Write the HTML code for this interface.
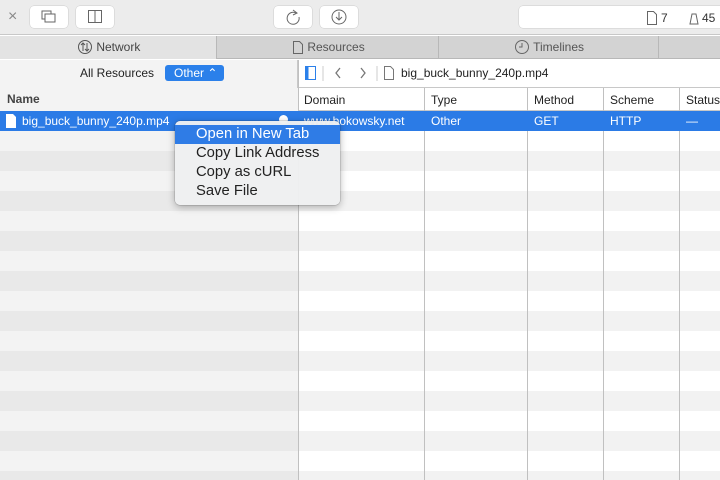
<!DOCTYPE html>
<html><head><style>
*{margin:0;padding:0;box-sizing:border-box}
body{width:720px;height:480px;overflow:hidden;font-family:"Liberation Sans",sans-serif;font-size:12px;color:#222;background:#fff;position:relative}
.abs{position:absolute}
.btn{position:absolute;top:6px;height:22px;background:#fff;border-radius:4px;box-shadow:0 0 0 0.5px #ccc}
</style></head><body>
<div class="abs" style="left:0;top:0;width:720px;height:35px;background:#ececec;border-bottom:1px solid #c8c8c8"></div>
<div class="abs" style="left:8px;top:8px;font-size:16px;color:#888">×</div>
<div class="btn" style="left:30px;width:38px"><svg width="38" height="22"><rect x="12" y="5" width="9" height="8" fill="none" stroke="#666"/><rect x="15" y="8" width="10" height="8" fill="#fff" stroke="#666"/></svg></div>
<div class="btn" style="left:76px;width:38px"><svg width="38" height="22"><rect x="12.5" y="4.5" width="13" height="12" fill="none" stroke="#666"/><line x1="19" y1="4.5" x2="19" y2="16.5" stroke="#666"/></svg></div>
<div class="btn" style="left:274px;width:38px"><svg width="38" height="22"><path d="M22 7 A6 6 0 1 0 25 11" fill="none" stroke="#666"/><path d="M19 4 L23 7 L19 9" fill="none" stroke="#666"/></svg></div>
<div class="btn" style="left:320px;width:38px"><svg width="38" height="22"><circle cx="19" cy="11" r="7" fill="none" stroke="#666"/><path d="M19 6v8M16 11l3 3 3-3" fill="none" stroke="#666"/></svg></div>
<div class="btn" style="left:519px;width:210px"></div>
<svg class="abs" style="left:646px;top:10px" width="74" height="16"><path d="M1.5 1.5h6l3 3v10h-9z" fill="none" stroke="#666"/><text x="15" y="12" font-size="12" fill="#333" font-family="Liberation Sans">7</text><path d="M44 14l2-10h4l2 10z" fill="none" stroke="#666"/><text x="56" y="12" font-size="12" fill="#333" font-family="Liberation Sans">45</text></svg>
<!-- tabs -->
<div class="abs" style="left:0;top:36px;width:720px;height:23px;background:#d3d3d3;border-bottom:1px solid #b8b8b8"></div>
<div class="abs" style="left:0;top:36px;width:217px;height:23px;background:#e3e3e3;border-right:1px solid #b8b8b8"></div>
<div class="abs" style="left:438px;top:36px;width:1px;height:23px;background:#b8b8b8"></div>
<div class="abs" style="left:658px;top:36px;width:1px;height:23px;background:#b8b8b8"></div>
<div class="abs" style="left:77px;top:39px;color:#444;line-height:17px"><svg width="16" height="16" style="vertical-align:-4px"><circle cx="8" cy="8" r="6.5" fill="none" stroke="#555"/><path d="M6 12V4M4 6l2-2 2 2M10 4v8M8 10l2 2 2-2" fill="none" stroke="#555"/></svg> Network</div>
<div class="abs" style="left:292px;top:39px;color:#555;line-height:17px"><svg width="12" height="14" style="vertical-align:-3px"><path d="M1.5 1.5h6l3 3v9h-9z" fill="none" stroke="#666"/></svg> Resources</div>
<div class="abs" style="left:514px;top:39px;color:#555;line-height:17px"><svg width="16" height="16" style="vertical-align:-4px"><circle cx="8" cy="8" r="6.5" fill="none" stroke="#666"/><path d="M8 4v4H5" fill="none" stroke="#666"/></svg> Timelines</div>
<!-- filter bar -->
<div class="abs" style="left:0;top:60px;width:720px;height:28px;background:#fff;border-bottom:1px solid #c8c8c8"></div>
<div class="abs" style="left:0;top:60px;width:298px;height:28px;background:#f3f3f3;border-right:1px solid #c8c8c8"></div>
<div class="abs" style="left:80px;top:66px">All Resources</div>
<div class="abs" style="left:165px;top:65px;width:59px;height:16px;background:#2b80ea;border-radius:3px;color:#fff;padding-left:9px;line-height:16px">Other ⌃</div>
<svg class="abs" style="left:303px;top:64px" width="100" height="20"><rect x="2.5" y="2.5" width="10" height="13" fill="none" stroke="#2b80ea"/><rect x="3" y="3" width="2.5" height="12" fill="#2b80ea"/><line x1="20" y1="2" x2="20" y2="17" stroke="#ccc"/><path d="M37 4l-4 5 4 5" fill="none" stroke="#777" stroke-width="1.3"/><path d="M58 4l4 5-4 5" fill="none" stroke="#777" stroke-width="1.3"/><line x1="74" y1="2" x2="74" y2="17" stroke="#ccc"/><path d="M81.5 2.5h6l3 3v10h-9z" fill="none" stroke="#777"/></svg>
<div class="abs" style="left:401px;top:66px">big_buck_bunny_240p.mp4</div>
<!-- header -->
<div class="abs" style="left:0;top:88px;width:720px;height:23px;background:#fff;border-bottom:1px solid #c8c8c8"></div>
<div class="abs" style="left:0;top:88px;width:298px;height:23px;background:#f3f3f3"></div>
<div class="abs" style="left:7px;top:92px;font-weight:bold;color:#444">Name</div>
<div class="abs" style="left:304px;top:93px">Domain</div>
<div class="abs" style="left:431px;top:93px">Type</div>
<div class="abs" style="left:534px;top:93px">Method</div>
<div class="abs" style="left:610px;top:93px">Scheme</div>
<div class="abs" style="left:686px;top:93px">Status</div>
<!-- rows -->
<div class="abs" style="left:0;top:111px;width:720px;height:369px;background:repeating-linear-gradient(#fff 0 20px,#f2f2f2 20px 40px);background-position:0 20px"></div>
<div class="abs" style="left:0;top:111px;width:298px;height:369px;background:repeating-linear-gradient(#f3f3f3 0 20px,#e9e9e9 20px 40px);background-position:0 20px"></div>
<div class="abs" style="left:298px;top:60px;width:1px;height:420px;background:#c0c0c0"></div>
<div class="abs" style="left:424px;top:88px;width:1px;height:392px;background:#c0c0c0"></div>
<div class="abs" style="left:527px;top:88px;width:1px;height:392px;background:#c0c0c0"></div>
<div class="abs" style="left:603px;top:88px;width:1px;height:392px;background:#c0c0c0"></div>
<div class="abs" style="left:679px;top:88px;width:1px;height:392px;background:#c0c0c0"></div>
<div class="abs" style="left:0;top:111px;width:720px;height:20px;background:#2b7be6"></div>
<svg class="abs" style="left:5px;top:113px" width="12" height="16"><path d="M1 1h7l3 3v11H1z" fill="#fff"/></svg>
<div class="abs" style="left:22px;top:114px;color:#fff">big_buck_bunny_240p.mp4</div>
<div class="abs" style="left:279px;top:115px;width:9px;height:9px;border-radius:50%;background:#fff"></div>
<div class="abs" style="left:304px;top:114px;color:#fff">www.bokowsky.net</div>
<div class="abs" style="left:431px;top:114px;color:#fff">Other</div>
<div class="abs" style="left:534px;top:114px;color:#fff">GET</div>
<div class="abs" style="left:610px;top:114px;color:#fff">HTTP</div>
<div class="abs" style="left:686px;top:114px;color:#fff">—</div>
<!-- context menu -->
<div class="abs" style="left:175px;top:121px;width:165px;height:84px;background:rgba(238,240,241,0.97);border-radius:5px;box-shadow:0 2px 8px rgba(0,0,0,0.3),0 0 0 0.5px rgba(0,0,0,0.2)"></div>
<div class="abs" style="left:175px;top:125px;width:165px;height:19px;background:#2f7ce6"></div>
<div class="abs" style="left:196px;top:126px;font-size:14.8px;color:#fff;line-height:17px">Open in New Tab</div>
<div class="abs" style="left:196px;top:145px;font-size:14.8px;color:#222;line-height:17px">Copy Link Address</div>
<div class="abs" style="left:196px;top:164px;font-size:14.8px;color:#222;line-height:17px">Copy as cURL</div>
<div class="abs" style="left:196px;top:183px;font-size:14.8px;color:#222;line-height:17px">Save File</div>
</body></html>
